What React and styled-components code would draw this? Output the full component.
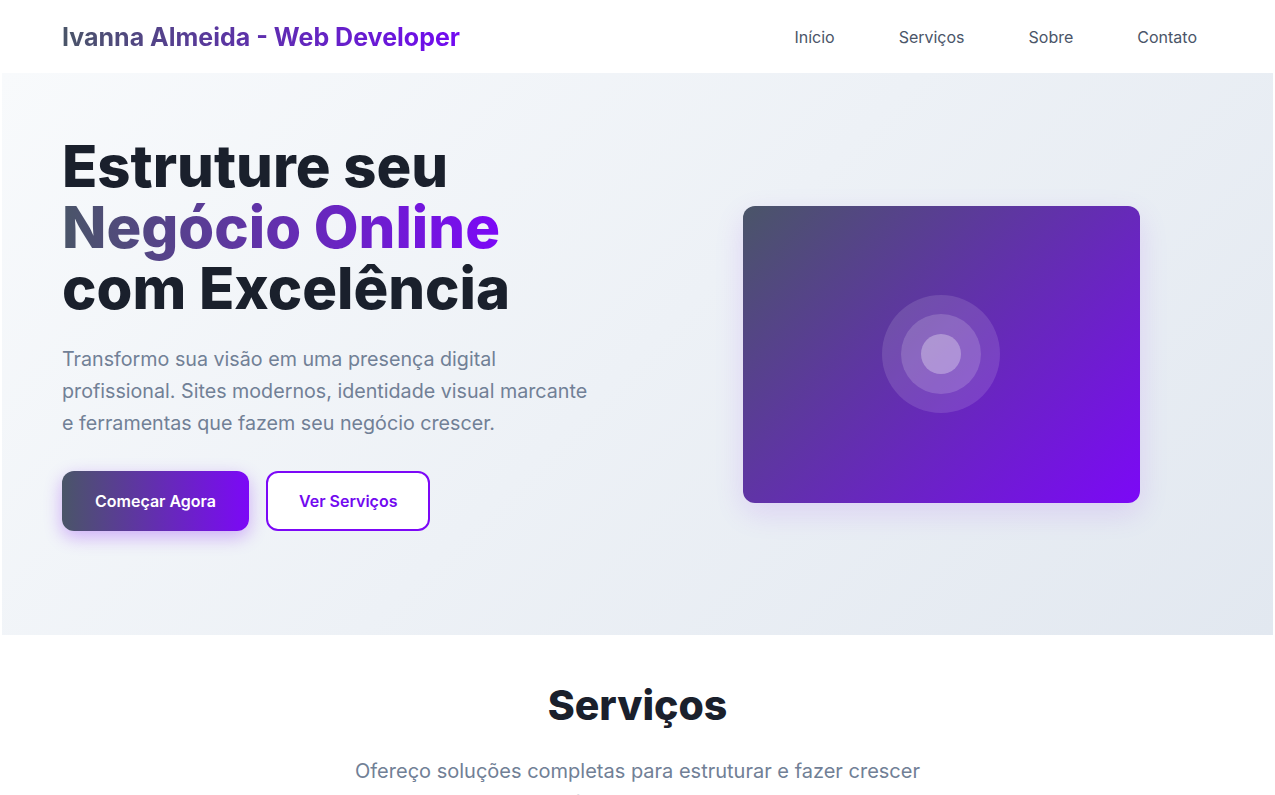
import styled, { createGlobalStyle } from 'styled-components'

const GlobalStyle = createGlobalStyle`
	* {
		box-sizing: border-box;
	}
	body {
		margin: 0;
		background: #ffffff;
		font-family: Inter, "Noto Sans", sans-serif;
		color: #1a202c;
	}
`

const links = ['Início', 'Serviços', 'Sobre', 'Contato']

export default function App() {
	return (
		<>
			<GlobalStyle />
			<Nav>
				<Container>
					<NavRow>
						<Logo>Ivanna Almeida - Web Developer</Logo>
						<NavLinks>
							{links.map(link => (
								<NavLink key={link} href="#">{link}</NavLink>
							))}
						</NavLinks>
					</NavRow>
				</Container>
			</Nav>

			<Hero>
				<Container>
					<HeroGrid>
						<HeroText>
							<Title>
								Estruture seu<br />
								<Gradient>Negócio Online</Gradient><br />
								com Excelência
							</Title>
							<Lead>
								Transformo sua visão em uma presença digital profissional. Sites modernos, identidade visual marcante e ferramentas que fazem seu negócio crescer.
							</Lead>
							<Buttons>
								<Button primary>Começar Agora</Button>
								<Button>Ver Serviços</Button>
							</Buttons>
						</HeroText>
						<HeroVisual>
							<Card>
								<Ring size={118} alpha={0.12}>
									<Ring size={80} alpha={0.16}>
										<Ring size={40} alpha={0.3} />
									</Ring>
								</Ring>
							</Card>
						</HeroVisual>
					</HeroGrid>
				</Container>
			</Hero>

			<Services>
				<Container>
					<SectionTitle>Serviços</SectionTitle>
					<SectionLead>
						Ofereço soluções completas para estruturar e fazer crescer seu negócio no mundo digital.
					</SectionLead>
				</Container>
			</Services>
		</>
	)
}

const Container = styled.div`
	width: 100%;
	padding: 0 62px;
`

const Nav = styled.nav`
	background: #ffffff;
	height: 73px;
	display: flex;
	align-items: center;
`

const NavRow = styled.div`
	display: flex;
	justify-content: space-between;
	align-items: center;
`

const Logo = styled.div`
	font-size: 25px;
	font-weight: 700;
	background: linear-gradient(90deg, #4a5568 0%, #7209f3 100%);
	-webkit-background-clip: text;
	background-clip: text;
	color: transparent;
`

const NavLinks = styled.div`
	display: flex;
	gap: 32px;
`

const NavLink = styled.a`
	color: #4a5568;
	text-decoration: none;
	font-size: 16px;
	font-weight: 400;
	padding: 8px 16px;
`

const Hero = styled.section`
	margin: 0 2px;
	min-height: 562px;
	display: flex;
	align-items: center;
	background: linear-gradient(135deg, #f8fafc 0%, #e2e8f0 100%);

	& > ${Container} {
		padding: 0 60px;
	}
`

const HeroGrid = styled.div`
	display: grid;
	grid-template-columns: 1fr 1fr;
	gap: 64px;
	align-items: center;
`

const HeroText = styled.div`
	padding-bottom: 42px;
`

const Title = styled.h1`
	margin: 0 0 24px;
	font-size: 58px;
	line-height: 61px;
	font-weight: 800;
	color: #1a202c;
`

const Gradient = styled.span`
	background: linear-gradient(90deg, #4a5568 0%, #7c08f7 100%);
	-webkit-background-clip: text;
	background-clip: text;
	color: transparent;
`

const Lead = styled.p`
	margin: 0 0 32px;
	max-width: 540px;
	font-size: 19.7px;
	line-height: 32px;
	color: #718096;
`

const Buttons = styled.div`
	display: flex;
	gap: 17px;
`

const Button = styled.button`
	font-family: inherit;
	font-size: 16px;
	font-weight: 600;
	height: 60px;
	padding: 0 31px;
	border-radius: 12px;
	cursor: pointer;
	border: 2px solid ${p => (p.primary ? 'transparent' : '#7c08f7')};
	background: ${p => (p.primary ? 'linear-gradient(90deg, #4a5568 0%, #7c08f7 100%) border-box' : '#ffffff')};
	color: ${p => (p.primary ? '#ffffff' : '#7209f0')};
	box-shadow: ${p => (p.primary ? '0 6px 18px rgba(124, 8, 247, 0.3)' : 'none')};
`

const HeroVisual = styled.div`
	display: flex;
	justify-content: center;
`

const Card = styled.div`
	width: 397px;
	height: 297px;
	border-radius: 12px;
	background: linear-gradient(135deg, #4a5568 0%, #7c08f7 100%);
	box-shadow: 0 10px 30px rgba(124, 8, 247, 0.12);
	display: flex;
	align-items: center;
	justify-content: center;
`

const Ring = styled.div`
	width: ${p => p.size}px;
	height: ${p => p.size}px;
	border-radius: 50%;
	background: rgba(255, 255, 255, ${p => p.alpha});
	display: flex;
	align-items: center;
	justify-content: center;
`

const Services = styled.section`
	padding: 46px 0 0;
	text-align: center;
`

const SectionTitle = styled.h2`
	margin: 0 0 26px;
	font-size: 41px;
	line-height: 48px;
	font-weight: 800;
	color: #1a202c;
`

const SectionLead = styled.p`
	margin: 0 auto;
	max-width: 600px;
	font-size: 20px;
	line-height: 32px;
	color: #718096;
`
